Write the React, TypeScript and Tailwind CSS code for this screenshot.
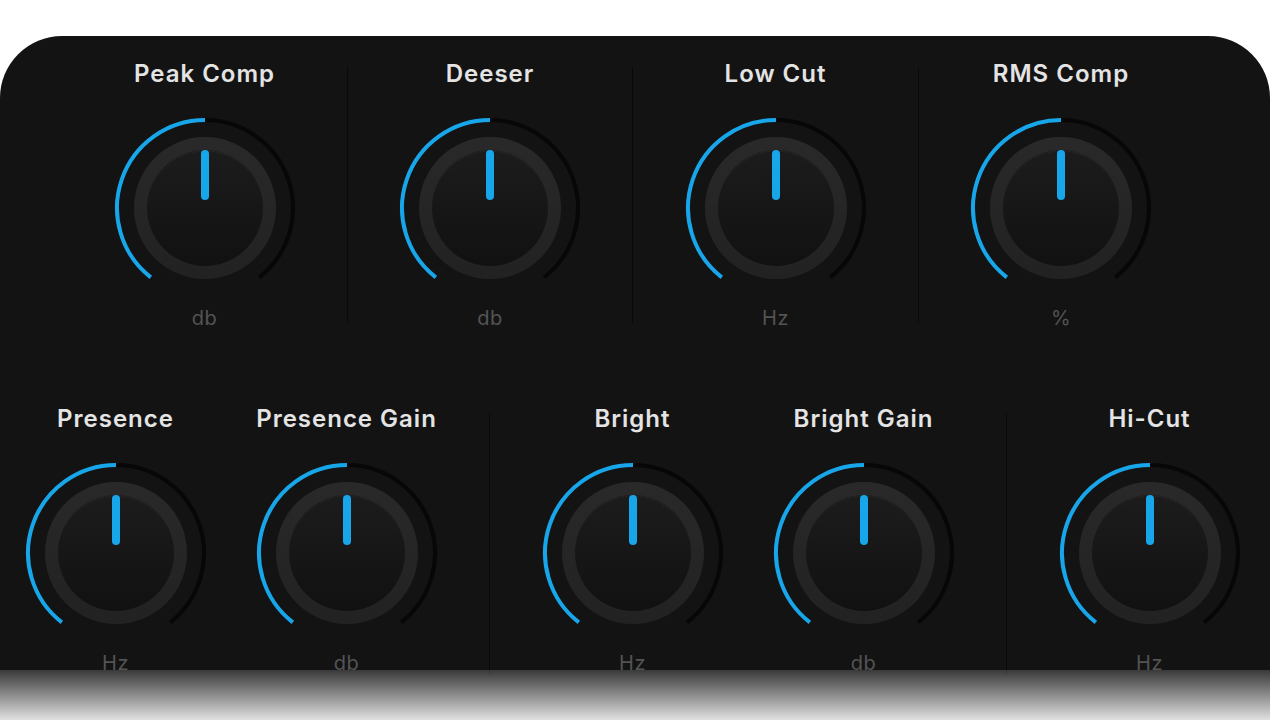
import React from 'react';

type KnobProps = {
  title: string;
  unit: string;
  id: string;
};

const BLUE = '#18a6ea';

function KnobDial({ id }: { id: string }) {
  return (
    <svg width="184" height="184" viewBox="0 0 184 184" className="block">
      <defs>
        <linearGradient id={`cap-${id}`} x1="0" y1="0" x2="0" y2="1">
          <stop offset="0" stopColor="#1c1c1c" />
          <stop offset="1" stopColor="#111111" />
        </linearGradient>
        <linearGradient id={`ring-${id}`} x1="0" y1="0" x2="0" y2="1">
          <stop offset="0" stopColor="#292929" />
          <stop offset="1" stopColor="#222222" />
        </linearGradient>
        <linearGradient id={`hl-${id}`} x1="0" y1="0" x2="0" y2="1">
          <stop offset="0" stopColor="#3a3a3a" stopOpacity="0.9" />
          <stop offset="0.35" stopColor="#3a3a3a" stopOpacity="0" />
        </linearGradient>
      </defs>
      {/* track */}
      <path d="M92 4 A88 88 0 0 1 146.18 161.34" fill="none" stroke="#070707" strokeWidth="4" />
      {/* value */}
      <path d="M37.82 161.34 A88 88 0 0 1 92 4" fill="none" stroke={BLUE} strokeWidth="4" />
      <circle cx="92" cy="92" r="71" fill={`url(#ring-${id})`} />
      <circle cx="92" cy="92" r="58" fill={`url(#cap-${id})`} />
      <circle cx="92" cy="92" r="57" fill="none" stroke={`url(#hl-${id})`} strokeWidth="1" strokeDasharray="1 2" />
      <rect x="88" y="34" width="8" height="50" rx="4" fill={BLUE} />
    </svg>
  );
}

function Knob({ title, unit, id, className }: KnobProps & { className?: string }) {
  return (
    <div className={`flex flex-col items-center ${className ?? ''}`}>
      <div className="text-[24px] leading-[28px] font-semibold text-[#e4e4e4] tracking-[1px] whitespace-nowrap">
        {title}
      </div>
      <div className="mt-[28px]">
        <KnobDial id={id} />
      </div>
      <div className="mt-[6px] text-[20px] leading-[24px] text-[#545454] tracking-[0.5px]">{unit}</div>
    </div>
  );
}

function Divider({ className }: { className?: string }) {
  return <div className={`w-px self-stretch bg-[#090909] ${className ?? ''}`} />;
}

export default function App() {
  return (
    <div className="w-[1280px] h-[720px] bg-white overflow-hidden pt-[36px]" style={{ fontFamily: 'Inter, "Noto Sans", sans-serif' }}>
      <div className="relative w-[1270px] h-[684px] bg-[#131313] rounded-tl-[62px] rounded-tr-[62px] overflow-hidden pt-[24px]">
        {/* top row */}
        <div className="flex pl-[62px]">
          <Knob id="pc" title="Peak Comp" unit="db" className="w-[285px]" />
          <Divider className="my-[7px]" />
          <Knob id="de" title="Deeser" unit="db" className="w-[284px]" />
          <Divider className="my-[7px]" />
          <Knob id="lc" title="Low Cut" unit="Hz" className="w-[285px]" />
          <Divider className="my-[7px]" />
          <Knob id="rms" title="RMS Comp" unit="%" className="w-[284px]" />
        </div>

        {/* bottom row */}
        <div className="flex mt-[75px]">
          <Knob id="pr" title="Presence" unit="Hz" className="w-[231px]" />
          <Knob id="prg" title="Presence Gain" unit="db" className="w-[231px]" />
          <Divider className="mx-[27px] mt-[8px]" />
          <Knob id="br" title="Bright" unit="Hz" className="w-[231px]" />
          <Knob id="brg" title="Bright Gain" unit="db" className="w-[231px]" />
          <Divider className="mx-[27px] mt-[8px]" />
          <Knob id="hc" title="Hi-Cut" unit="Hz" className="w-[231px]" />
        </div>

        {/* bottom fade */}
        <div className="absolute left-0 right-0 bottom-0 h-[50px] bg-gradient-to-b from-[rgba(255,255,255,0.16)] to-[rgba(255,255,255,0.87)]" />
      </div>
    </div>
  );
}
